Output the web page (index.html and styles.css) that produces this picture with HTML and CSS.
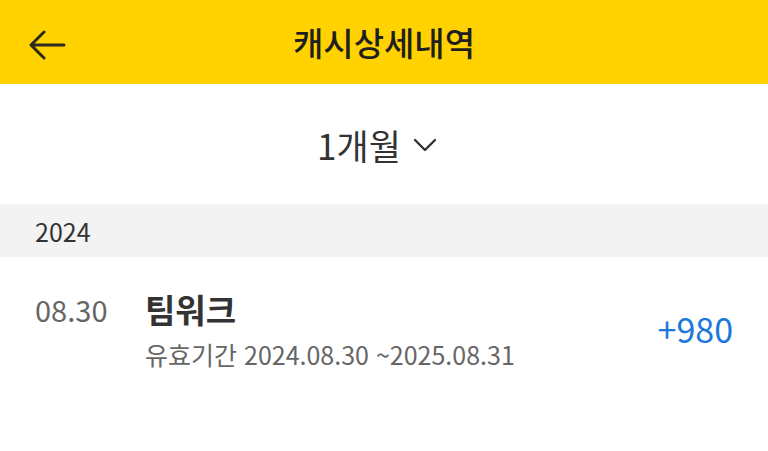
FILE: index.html
```html
<!DOCTYPE html>
<html lang="ko">
<head>
  <meta charset="utf-8">
  <title>캐시상세내역</title>
  <link rel="stylesheet" href="styles.css">
</head>
<body>
  <div class="app">
    <header class="topbar">
      <button class="back" aria-label="뒤로">
        <svg width="38" height="30" viewBox="0 0 38 30">
          <path d="M36 15H4M16 2L3 15l13 13" fill="none" stroke="#2b2b20" stroke-width="3" stroke-linecap="round" stroke-linejoin="round"/>
        </svg>
      </button>
      <h1 class="title">캐시상세내역</h1>
    </header>

    <div class="period">
      <span class="period-label">1개월</span>
      <svg class="chevron" width="24" height="14" viewBox="0 0 24 14">
        <path d="M2 2l10 10L22 2" fill="none" stroke="#333" stroke-width="2.4" stroke-linecap="round" stroke-linejoin="round"/>
      </svg>
    </div>

    <div class="year">2024</div>

    <ul class="list">
      <li class="item">
        <div class="date">08.30</div>
        <div class="info">
          <div class="name">팀워크</div>
          <div class="expire">유효기간 2024.08.30 ~2025.08.31</div>
        </div>
        <div class="amount">+980</div>
      </li>
    </ul>
  </div>
</body>
</html>
```

FILE: styles.css
```css
body {
  margin: 0;
  font-family: "Noto Sans CJK KR", "Noto Sans", sans-serif;
  background-color: #fff;
  color: #333;
}

.app {
  width: 768px;
}

.topbar {
  height: 84px;
  background-color: #ffd200;
  display: flex;
  align-items: center;
  justify-content: center;
  position: relative;
}

.back {
  position: absolute;
  left: 28px;
  top: 30px;
  padding: 0;
  border: 0;
  background: none;
  display: flex;
}

.title {
  margin: 0;
  font-size: 33px;
  font-weight: 500;
  color: #1f1f1f;
}

.period {
  height: 120px;
  display: flex;
  align-items: center;
  justify-content: center;
  gap: 12px;
  padding-right: 14px;
}

.period-label {
  font-size: 35px;
  color: #333;
}

.chevron {
  margin-top: 2px;
}

.year {
  height: 53px;
  background-color: #f3f3f3;
  padding-left: 35px;
  display: flex;
  align-items: center;
  font-size: 25px;
  color: #333;
}

.list {
  list-style: none;
  margin: 0;
  padding: 0;
}

.item {
  display: flex;
  align-items: center;
  padding: 28px 35px 24px 35px;
}

.date {
  width: 110px;
  align-self: flex-start;
  font-size: 29px;
  color: #666;
  line-height: 48px;
}

.info {
  flex: 1;
}

.name {
  font-size: 33px;
  font-weight: 700;
  color: #333;
  line-height: 48px;
}

.expire {
  margin-top: 3px;
  font-size: 25px;
  color: #666;
}

.amount {
  font-size: 34px;
  color: #1a78dc;
}
```
